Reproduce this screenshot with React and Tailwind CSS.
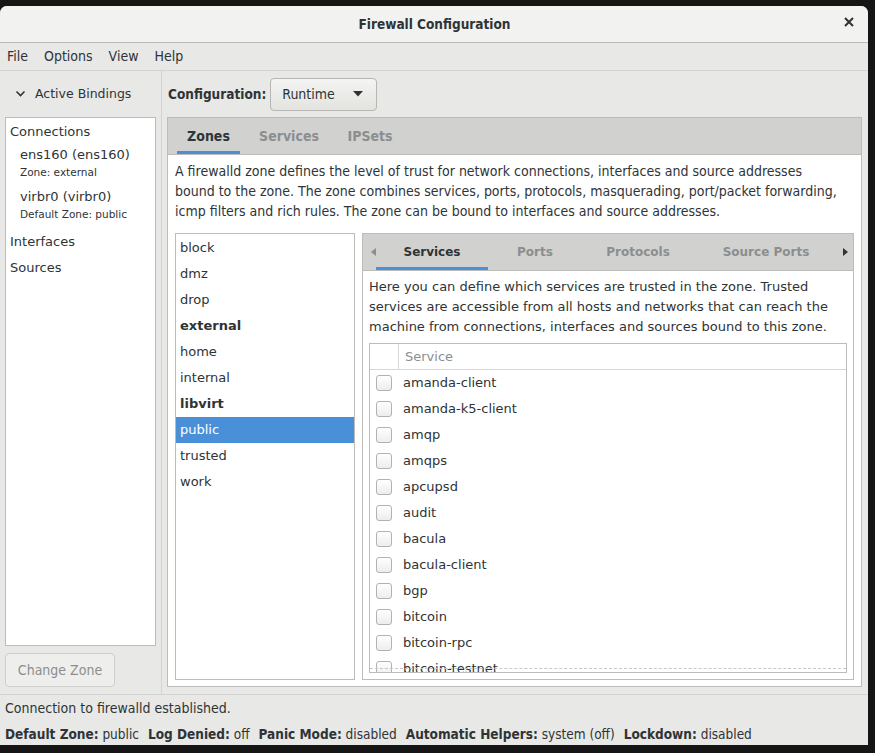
import React from 'react'

const narrow = { fontFamily: '"Liberation Sans Narrow", "DejaVu Sans Condensed", "Liberation Sans", sans-serif' }
const sans = { fontFamily: '"DejaVu Sans", "Liberation Sans", sans-serif' }

const zones = [
  { name: 'block' },
  { name: 'dmz' },
  { name: 'drop' },
  { name: 'external', bold: true },
  { name: 'home' },
  { name: 'internal' },
  { name: 'libvirt', bold: true },
  { name: 'public', selected: true },
  { name: 'trusted' },
  { name: 'work' },
]

const services = [
  'amanda-client',
  'amanda-k5-client',
  'amqp',
  'amqps',
  'apcupsd',
  'audit',
  'bacula',
  'bacula-client',
  'bgp',
  'bitcoin',
  'bitcoin-rpc',
  'bitcoin-testnet',
]

function Checkbox() {
  return (
    <span className="block w-[16px] h-[16px] rounded-[3px] border border-[#b2b2b0] bg-gradient-to-b from-white to-[#ededeb] shrink-0" />
  )
}

export default function App() {
  return (
    <div className="w-[875px] h-[753px] bg-[#151515] pt-[6px] overflow-hidden" style={sans}>
      <div className="w-[868px] h-[739px] bg-[#e8e8e7] rounded-t-[7px] flex flex-col text-[#2e3436]">
        {/* title bar */}
        <div className="h-[37px] shrink-0 rounded-t-[7px] bg-[#f2f2f1] border-b border-[#bcbcba] flex items-center relative">
          <div className="flex-1 text-center text-[13.5px] font-bold text-[#2e3436] pl-[1px]" style={narrow}>
            Firewall Configuration
          </div>
          <div className="absolute right-[12px] top-[9px] text-[#2e3436]">
            <svg width="14" height="14" viewBox="0 0 14 14">
              <path d="M3 3 L11 11 M11 3 L3 11" stroke="#2e3436" strokeWidth="2" />
            </svg>
          </div>
        </div>

        {/* menu bar */}
        <div className="h-[28px] shrink-0 border-b border-[#d3d3d1] flex items-center gap-[16px] pl-[7px] text-[14px]" style={narrow}>
          <span>File</span>
          <span>Options</span>
          <span>View</span>
          <span>Help</span>
        </div>

        {/* main */}
        <div className="flex flex-1 min-h-0">
          {/* left */}
          <div className="w-[162px] shrink-0 border-r border-[#d3d3d1] flex flex-col px-[5px] pb-[7px]">
            <div className="h-[46px] flex items-center gap-[9px] pl-[10px] text-[12.5px]">
              <svg width="11" height="8" viewBox="0 0 11 8">
                <path d="M1.5 1.5 L5.5 5.5 L9.5 1.5" fill="none" stroke="#2e3436" strokeWidth="1.6" />
              </svg>
              <span>Active Bindings</span>
            </div>
            <div className="flex-1 bg-white border border-[#bcbcba] text-[13px] pt-[1px]">
              <div className="h-[26px] flex items-center pl-[4px]">Connections</div>
              <div className="pl-[14px] pt-[1px] h-[42px]">
                <div className="leading-[18px]">ens160 (ens160)</div>
                <div className="leading-[16px] text-[10.5px]">Zone: external</div>
              </div>
              <div className="pl-[14px] pt-[1px] h-[42px]">
                <div className="leading-[18px]">virbr0 (virbr0)</div>
                <div className="leading-[16px] text-[10.5px]">Default Zone: public</div>
              </div>
              <div className="h-[26px] flex items-center pl-[4px]">Interfaces</div>
              <div className="h-[26px] flex items-center pl-[4px]">Sources</div>
            </div>
            <div className="mt-[7px] w-[110px] h-[34px] rounded-[4px] border border-[#cfcfcd] bg-[#eeeeed] flex items-center justify-center text-[14px] text-[#8b8e8f]" style={narrow}>
              Change Zone
            </div>
          </div>

          {/* right */}
          <div className="flex-1 flex flex-col pl-[5px] pr-[6px] pb-[7px] min-w-0">
            <div className="h-[46px] flex items-center gap-[4px] shrink-0">
              <span className="font-bold text-[13.5px] pl-[1px]" style={narrow}>Configuration:</span>
              <div className="w-[107px] h-[33px] rounded-[4px] border border-[#b6b6b3] bg-gradient-to-b from-[#f4f4f2] to-[#e3e3e0] flex items-center justify-between pl-[11px] pr-[13px] text-[14px]" style={narrow}>
                <span>Runtime</span>
                <svg width="10" height="6" viewBox="0 0 10 6"><path d="M0 0 H10 L5 5.5 Z" fill="#2e3436" /></svg>
              </div>
            </div>

            {/* notebook */}
            <div className="flex-1 border border-[#bcbcba] flex flex-col min-h-0">
              <div className="h-[37px] shrink-0 bg-[#d1d1cf] border-b border-[#bcbcba] flex items-stretch pl-[9px] text-[14px] font-bold" style={narrow}>
                <div className="w-[63px] flex items-center justify-center border-b-[3px] border-[#4a90d9] pt-[3px] text-[#2e3436]">Zones</div>
                <div className="w-[98px] flex items-center justify-center text-[#8b8e8f]">Services</div>
                <div className="w-[64px] flex items-center justify-center text-[#8b8e8f]">IPSets</div>
              </div>
              <div className="flex-1 bg-white flex flex-col px-[7px] pb-[6px] min-h-0">
                <p className="pt-[6px] text-[14px] leading-[20px] text-[#2e3436] whitespace-nowrap" style={narrow}>
                  A firewalld zone defines the level of trust for network connections, interfaces and source addresses
                  <br />
                  bound to the zone. The zone combines services, ports, protocols, masquerading, port/packet forwarding,
                  <br />
                  icmp filters and rich rules. The zone can be bound to interfaces and source addresses.
                </p>
                <div className="flex-1 flex gap-[7px] mt-[12px] min-h-0">
                  {/* zone list */}
                  <div className="w-[180px] shrink-0 border border-[#bcbcba] bg-white text-[13px] pt-[1px]">
                    {zones.map((z) => (
                      <div
                        key={z.name}
                        className={
                          'h-[26px] flex items-center pl-[4px] ' +
                          (z.selected ? 'bg-[#4a90d9] text-white ' : '') +
                          (z.bold ? 'font-bold' : '')
                        }
                      >
                        {z.name}
                      </div>
                    ))}
                  </div>

                  {/* sub notebook */}
                  <div className="flex-1 border border-[#bcbcba] flex flex-col min-w-0">
                    <div className="h-[37px] shrink-0 bg-[#d1d1cf] border-b border-[#bcbcba] flex items-stretch text-[12px] font-bold">
                      <div className="w-[13px] flex items-center justify-end">
                        <svg width="5" height="8" viewBox="0 0 5 8"><path d="M5 0 V8 L0 4 Z" fill="#8b8e8f" /></svg>
                      </div>
                      <div className="w-[112px] flex items-center justify-center border-b-[3px] border-[#4a90d9] pt-[3px]">Services</div>
                      <div className="w-[94px] flex items-center justify-center text-[#8b8e8f]">Ports</div>
                      <div className="w-[112px] flex items-center justify-center text-[#8b8e8f]">Protocols</div>
                      <div className="w-[144px] flex items-center justify-center text-[#8b8e8f]">Source Ports</div>
                      <div className="flex-1 flex items-center justify-center">
                        <svg width="5" height="8" viewBox="0 0 5 8"><path d="M0 0 V8 L5 4 Z" fill="#2e3436" /></svg>
                      </div>
                    </div>
                    <div className="flex-1 bg-white flex flex-col px-[6px] pb-[6px] min-h-0">
                      <p className="pt-[6px] text-[13px] leading-[20px]">
                        Here you can define which services are trusted in the zone. Trusted
                        services are accessible from all hosts and networks that can reach the
                        machine from connections, interfaces and sources bound to this zone.
                      </p>
                      <div className="flex-1 mt-[6px] border border-[#bcbcba] relative overflow-hidden min-h-0">
                        <div className="h-[26px] flex border-b border-[#d8d8d6]">
                          <div className="w-[29px] border-r border-[#d8d8d6]" />
                          <div className="flex items-center pl-[6px] text-[13px] text-[#8b8e8f]">Service</div>
                        </div>
                        {services.map((s) => (
                          <div key={s} className="h-[26px] flex items-center gap-[11px] pl-[6px] text-[13px]">
                            <Checkbox />
                            <span>{s}</span>
                          </div>
                        ))}
                        <div className="absolute left-0 right-0 bottom-[3px] border-t border-dashed border-[#c8c8c6]" />
                      </div>
                    </div>
                  </div>
                </div>
              </div>
            </div>
          </div>
        </div>

        {/* status */}
        <div className="h-[51px] shrink-0 border-t border-[#d3d3d1] flex flex-col px-[5px]" style={narrow}>
          <div className="h-[24px] flex items-center pt-[2px] text-[14px]">Connection to firewalld established.</div>
          <div className="h-[26px] flex items-center gap-[9px] pt-[4px] text-[13.5px]">
            <span><b>Default Zone:</b> public</span>
            <span><b>Log Denied:</b> off</span>
            <span><b>Panic Mode:</b> disabled</span>
            <span><b>Automatic Helpers:</b> system (off)</span>
            <span><b>Lockdown:</b> disabled</span>
          </div>
        </div>
      </div>
    </div>
  )
}
